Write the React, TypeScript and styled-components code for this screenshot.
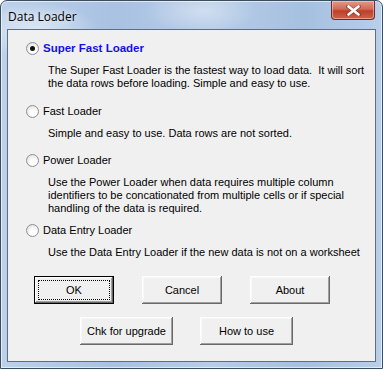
import styled, { createGlobalStyle } from "styled-components";

const GlobalStyle = createGlobalStyle`
  html, body {
    margin: 0;
    padding: 0;
    background: #ffffff;
  }
  body {
    font-family: "Liberation Sans", Arial, sans-serif;
  }
`;

type LoaderOption = {
  id: string;
  label: string;
  lines: string[];
  gapAfter: number;
};

const options: LoaderOption[] = [
  {
    id: "super",
    label: "Super Fast Loader",
    lines: [
      "The Super Fast Loader is the fastest way to load data.\u00a0 It will sort",
      "the data rows before loading. Simple and easy to use.",
    ],
    gapAfter: 14,
  },
  {
    id: "fast",
    label: "Fast Loader",
    lines: ["Simple and easy to use. Data rows are not sorted."],
    gapAfter: 13,
  },
  {
    id: "power",
    label: "Power Loader",
    lines: [
      "Use the Power Loader when data requires multiple column",
      "identifiers to be concationated from multiple cells or if special",
      "handling of the data is required.",
    ],
    gapAfter: 8,
  },
  {
    id: "entry",
    label: "Data Entry Loader",
    lines: ["Use the Data Entry Loader if the new data is not on a worksheet"],
    gapAfter: 0,
  },
];

const App = () => {
  const selected = "super";
  return (
    <>
      <GlobalStyle />
      <Window>
        <TitleBar>
          <Title>Data Loader</Title>
          <CloseButton aria-label="Close">
            <svg width="15" height="11" viewBox="0 0 15 11">
              <path
                d="M2 1.5 L13 9.5 M13 1.5 L2 9.5"
                stroke="#4a2020"
                strokeWidth="4"
                strokeLinecap="round"
                opacity="0.45"
              />
              <path
                d="M2.5 1.5 L12.5 9.5 M12.5 1.5 L2.5 9.5"
                stroke="#ffffff"
                strokeWidth="2.6"
                strokeLinecap="round"
              />
            </svg>
          </CloseButton>
        </TitleBar>
        <Client>
          <OptionList>
            {options.map((opt) => (
              <OptionBlock key={opt.id} $gapAfter={opt.gapAfter}>
                <RadioRow>
                  <Radio $checked={opt.id === selected} />
                  <RadioLabel $active={opt.id === selected}>
                    {opt.label}
                  </RadioLabel>
                </RadioRow>
                <Description>
                  {opt.lines.map((line) => (
                    <div key={line}>{line}</div>
                  ))}
                </Description>
              </OptionBlock>
            ))}
          </OptionList>
          <ButtonRow $left={26} $gap={28}>
            <Button $default $width={80}>
              <FocusRect>OK</FocusRect>
            </Button>
            <Button $width={80}>Cancel</Button>
            <Button $width={80}>About</Button>
          </ButtonRow>
          <ButtonRow $left={72} $gap={27}>
            <Button $width={93}>Chk for upgrade</Button>
            <Button $width={93}>How to use</Button>
          </ButtonRow>
        </Client>
      </Window>
    </>
  );
};

export default App;

const Window = styled.div`
  width: 383px;
  height: 369px;
  box-sizing: border-box;
  display: flex;
  flex-direction: column;
  border: 1px solid #3b4d63;
  border-radius: 7px 7px 0 0;
  background:
    radial-gradient(ellipse 90px 40px at 35px 30px, rgba(255, 255, 255, 0.55), rgba(255, 255, 255, 0) 70%),
    radial-gradient(ellipse 80px 30px at 200px 10px, rgba(255, 255, 255, 0.35), rgba(255, 255, 255, 0) 70%),
    linear-gradient(90deg, #bcd1ea 0%, #a9c2e2 30%, #b7cde8 55%, #a6c0e0 80%, #b9cfea 100%);
  box-shadow: inset 0 0 0 1px rgba(255, 255, 255, 0.6);
`;

const TitleBar = styled.div`
  height: 28px;
  display: flex;
  align-items: flex-start;
  justify-content: space-between;
  padding: 0 7px 0 7px;
`;

const Title = styled.div`
  margin-top: 7px;
  font-family: "Open Sans", "Liberation Sans", sans-serif;
  font-size: 12px;
  color: #000000;
  text-shadow: 0 0 6px rgba(255, 255, 255, 0.9);
`;

const CloseButton = styled.button`
  width: 44px;
  height: 19px;
  margin-top: 0;
  padding: 0;
  display: flex;
  align-items: center;
  justify-content: center;
  border: 1px solid #6d2a26;
  border-top: none;
  border-radius: 0 0 4px 4px;
  background: linear-gradient(
    180deg,
    #e29a88 0%,
    #d06a55 45%,
    #bd3f2a 55%,
    #cb6549 100%
  );
  box-shadow: inset 0 0 0 1px rgba(255, 220, 210, 0.5);
`;

const Client = styled.div`
  flex: 1;
  margin: 0 6px 6px 6px;
  border: 1px solid #5e6e80;
  background: #f0f0f0;
  padding: 11px 0 0 18px;
  font-family: "Liberation Sans", Arial, sans-serif;
  font-size: 11px;
  color: #000000;
`;

const OptionList = styled.div`
  display: flex;
  flex-direction: column;
  margin-bottom: 17px;
`;

const OptionBlock = styled.div<{ $gapAfter: number }>`
  display: flex;
  flex-direction: column;
  margin-bottom: ${(p) => p.$gapAfter}px;
`;

const RadioRow = styled.div`
  display: flex;
  align-items: center;
  height: 14px;
  gap: 4px;
`;

const Radio = styled.span<{ $checked?: boolean }>`
  position: relative;
  width: 11px;
  height: 11px;
  border-radius: 50%;
  border: 1px solid #8e8f8f;
  background: radial-gradient(circle at 60% 65%, #ffffff 30%, #d6d6d6 100%);
  flex: none;
  &::after {
    content: "";
    display: ${(p) => (p.$checked ? "block" : "none")};
    position: absolute;
    left: 3px;
    top: 3px;
    width: 5px;
    height: 5px;
    border-radius: 50%;
    background: #111111;
  }
`;

const RadioLabel = styled.span<{ $active?: boolean }>`
  font-size: ${(p) => (p.$active ? "11.5px" : "11px")};
  font-weight: ${(p) => (p.$active ? 700 : 400)};
  color: ${(p) => (p.$active ? "#1010f0" : "#000000")};
  white-space: nowrap;
`;

const Description = styled.div`
  margin-top: 9px;
  margin-left: 22px;
  line-height: 13px;
  white-space: nowrap;
`;

const ButtonRow = styled.div<{ $left: number; $gap: number }>`
  display: flex;
  gap: ${(p) => p.$gap}px;
  padding-left: ${(p) => p.$left - 18}px;
  margin-bottom: 13px;
`;

const Button = styled.button<{ $width: number; $default?: boolean }>`
  width: ${(p) => p.$width}px;
  height: 28px;
  padding: 0;
  font-family: "Liberation Sans", Arial, sans-serif;
  font-size: 11px;
  color: #000000;
  background: #f0f0f0;
  border: ${(p) => (p.$default ? "1px solid #000000" : "none")};
  box-shadow: ${(p) =>
    p.$default
      ? "inset -1px -1px #696969, inset 1px 1px #ffffff, inset -2px -2px #a0a0a0"
      : "inset -1px -1px #696969, inset 1px 1px #ffffff, inset -2px -2px #a0a0a0, inset 2px 2px #f8f8f8"};
  display: flex;
  align-items: center;
  justify-content: center;
`;

const FocusRect = styled.span`
  width: 70px;
  height: 18px;
  display: flex;
  align-items: center;
  justify-content: center;
  outline: 1px dotted #000000;
`;
